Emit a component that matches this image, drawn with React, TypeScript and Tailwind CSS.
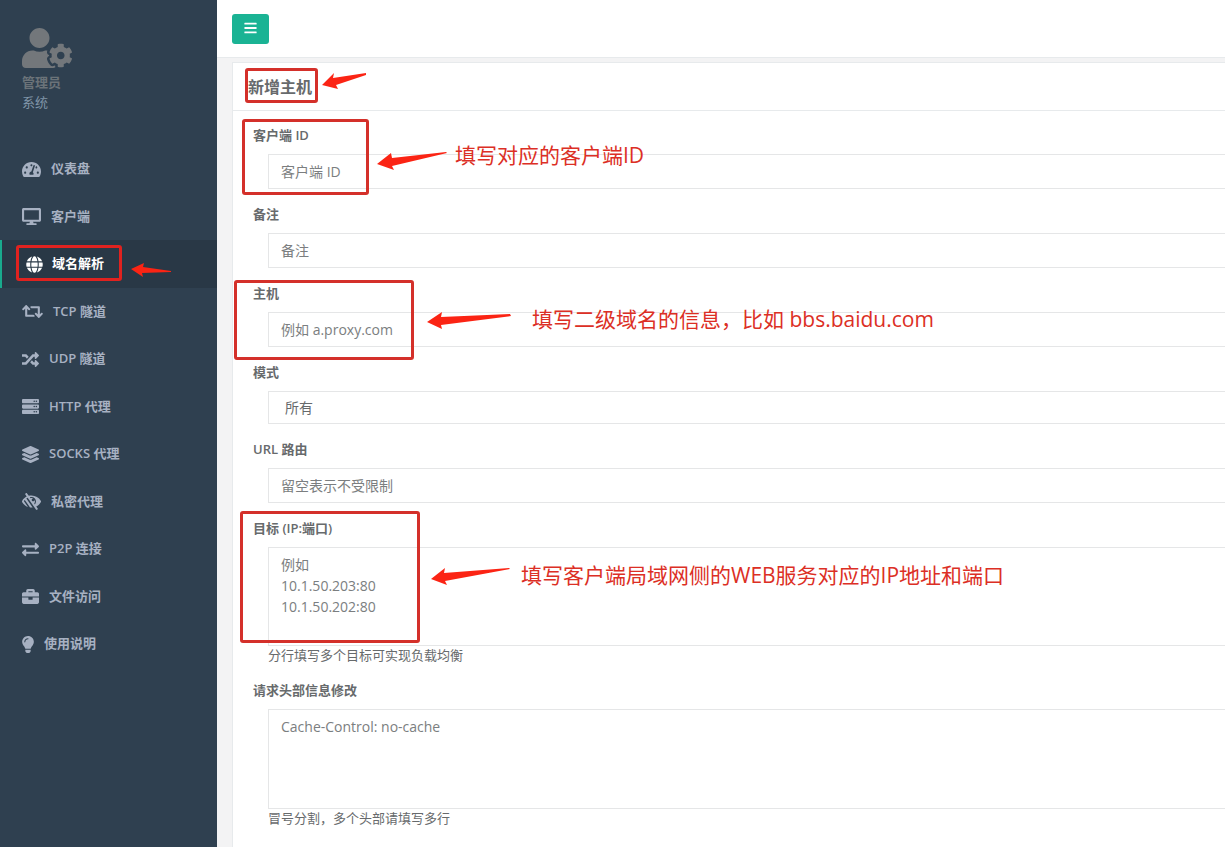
import React from 'react'
import type { ReactNode } from 'react'
import type { IconType } from 'react-icons'
import {
  FaBars,
  FaBriefcase,
  FaDesktop,
  FaExchangeAlt,
  FaGlobe,
  FaLayerGroup,
  FaLightbulb,
  FaLowVision,
  FaRandom,
  FaRetweet,
  FaServer,
  FaTachometerAlt,
  FaUserCog
} from 'react-icons/fa'

// The glyphs differ in width, and the label follows right after each one
const menu: { label: string; icon: IconType; width: string; active?: boolean }[] = [
  { label: '仪表盘', icon: FaTachometerAlt, width: 'w-[19px]' },
  { label: '客户端', icon: FaDesktop, width: 'w-[19px]' },
  { label: '域名解析', icon: FaGlobe, width: 'w-[17px]', active: true },
  { label: 'TCP 隧道', icon: FaRetweet, width: 'w-[21px]' },
  { label: 'UDP 隧道', icon: FaRandom, width: 'w-[17px]' },
  { label: 'HTTP 代理', icon: FaServer, width: 'w-[17px]' },
  { label: 'SOCKS 代理', icon: FaLayerGroup, width: 'w-[17px]' },
  { label: '私密代理', icon: FaLowVision, width: 'w-[19px]' },
  { label: 'P2P 连接', icon: FaExchangeAlt, width: 'w-[17px]' },
  { label: '文件访问', icon: FaBriefcase, width: 'w-[17px]' },
  { label: '使用说明', icon: FaLightbulb, width: 'w-[12px]' }
]

const control =
  'block w-full border border-r-0 border-[#e5e6e7] bg-white text-sm text-[#676a6c] placeholder:text-[#7b7e80] placeholder:opacity-100 outline-none focus:border-[#1ab394]'

const Sidebar = () => {
  return (
    <aside className="w-[217px] shrink-0 bg-[#2f4050]">
      <div className="flex h-[145px] flex-col items-start pl-[22px] pt-7">
        <FaUserCog className="h-10 w-[50px] text-[#73777b]" />
        <span className="mt-1 leading-5 font-semibold text-[#6b7379]">管理员</span>
        <span className="leading-5 text-[#8095a8]">系统</span>
      </div>
      <ul>
        {menu.map(({ label, icon: Icon, width, active }) => (
          <li key={label} className="odd:h-12 even:h-[47px]">
            <a
              href="#"
              className={
                active
                  ? 'flex h-full items-center gap-[9px] border-l-2 border-[#19aa8d] bg-[#293846] pl-6 font-semibold text-white'
                  : 'flex h-full items-center gap-[10px] pl-[22px] font-semibold text-[#a7b1c2]'
              }
            >
              <Icon className={`h-[17px] ${width}`} />
              {label}
            </a>
          </li>
        ))}
      </ul>
    </aside>
  )
}

type FieldProps = { id: string; label: string; help?: string; children: ReactNode }

const Field = ({ id, label, help, children }: FieldProps) => {
  return (
    <div className="mb-[15px]">
      <label htmlFor={id} className="mb-[9px] block leading-5 font-semibold">{label}</label>
      <div className="pl-[15px]">
        {children}
        {help && <span className="block leading-[19px]">{help}</span>}
      </div>
    </div>
  )
}

const Frame = ({ className }: { className: string }) => (
  <div className={`absolute rounded-[3px] border-3 ${className}`} />
)

const Note = ({ className, children }: { className: string; children: ReactNode }) => (
  <p className={`absolute whitespace-nowrap text-[21px] leading-7 text-[#dc2f25] ${className}`}>{children}</p>
)

// Red guide marks that lie over the form
const Guide = () => {
  return (
    <div className="pointer-events-none absolute inset-0 overflow-hidden">
      <Frame className="left-[245px] top-[68px] h-[35px] w-[73px] border-[#d4302a]" />
      <Frame className="left-[242px] top-[119px] h-[76px] w-[127px] border-[#d4302a]" />
      <Frame className="left-[16px] top-[245px] h-[36px] w-[106px] border-[#e0221f]" />
      <Frame className="left-[234px] top-[280px] h-[80px] w-[180px] border-[#d4302a]" />
      <Frame className="left-[240px] top-[511px] h-[132px] w-[180px] border-[#d4302a]" />
      <svg className="absolute left-0 top-0" width="600" height="600" fill="#fb2414">
        <path d="M322 85 L334 73 L333 78 L366 73 L366 75 L336 85 L338 89 Z" />
        <path d="M377 164 L391 153 L392 158 L446 152 L447 153 L392 166 L394 170 Z" />
        <path d="M131 269 L144 263 L143 267 L171 271 L171 272 L142 273 L143 277 Z" />
        <path d="M427 322 L442 312 L441 317 L510 314 L511 316 L441 325 L442 329 Z" />
        <path d="M431 579 L445 568 L444 573 L509 568 L510 569 L445 581 L447 585 Z" />
      </svg>
      <Note className="left-[455px] top-[141px]">填写对应的客户端ID</Note>
      <Note className="left-[532px] top-[305px]">填写二级域名的信息，比如 bbs.baidu.com</Note>
      <Note className="left-[521px] top-[561px]">填写客户端局域网侧的WEB服务对应的IP地址和端口</Note>
    </div>
  )
}

const App = () => {
  return (
    <div className="relative flex min-h-screen overflow-hidden bg-[#f3f3f4] font-['Open_Sans','Noto_Sans_CJK_SC',sans-serif] text-[13px] text-[#676a6c]">
      <Sidebar />
      <div className="flex min-w-0 flex-1 flex-col">
        <header className="h-[58px] border-b border-[#e7eaec] bg-white pl-[15px] pt-[14px]">
          <button type="button" aria-label="菜单" className="flex h-[30px] w-[37px] items-center justify-center rounded-[3px] bg-[#1ab394] pb-[2px] text-white">
            <FaBars className="h-[14px] w-[13px]" />
          </button>
        </header>
        <main className="mt-1 ml-[15px] flex-1 border-t border-l border-[#e7eaec] bg-white">
          <div className="border-b border-[#e7eaec] pl-[15px] pt-[10px] pb-[9px]">
            <h1 className="text-base leading-7 font-semibold">新增主机</h1>
          </div>
          <form className="pt-[14px] pl-5">
            <Field id="client" label="客户端 ID">
              <input id="client" type="text" placeholder="客户端 ID" className={`${control} h-[35px] px-3`} />
            </Field>
            <Field id="remark" label="备注">
              <input id="remark" type="text" placeholder="备注" className={`${control} h-[35px] px-3`} />
            </Field>
            <Field id="host" label="主机">
              <input id="host" type="text" placeholder="例如 a.proxy.com" className={`${control} h-[35px] px-3`} />
            </Field>
            <Field id="scheme" label="模式">
              <select id="scheme" className={`${control} h-[33px] appearance-none px-4`}>
                <option>所有</option>
                <option>HTTP</option>
                <option>HTTPS</option>
              </select>
            </Field>
            <Field id="location" label="URL 路由">
              <input id="location" type="text" placeholder="留空表示不受限制" className={`${control} h-[35px] px-3`} />
            </Field>
            <Field id="target" label="目标 (IP:端口)" help="分行填写多个目标可实现负载均衡">
              <textarea
                id="target"
                placeholder={'例如\n10.1.50.203:80\n10.1.50.202:80'}
                className={`${control} h-[99px] resize-none px-3 py-[6px] leading-[21px]`}
              />
            </Field>
            <Field id="header" label="请求头部信息修改" help="冒号分割，多个头部请填写多行">
              <textarea
                id="header"
                placeholder="Cache-Control: no-cache"
                className={`${control} h-[100px] resize-none px-3 py-[6px] leading-[21px]`}
              />
            </Field>
          </form>
        </main>
      </div>
      <Guide />
    </div>
  )
}

export default App
